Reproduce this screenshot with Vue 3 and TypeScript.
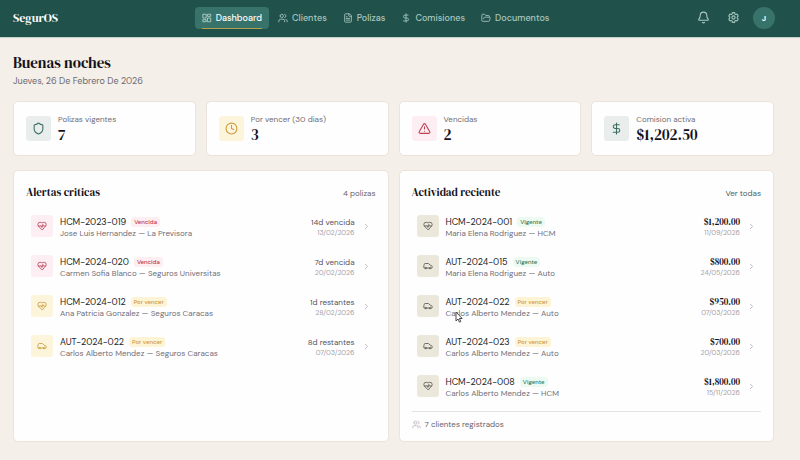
<script setup lang="ts">
import { h, type FunctionalComponent } from 'vue'

type Tone = 'danger' | 'warn' | 'green' | 'neutral'
type Status = 'Vencida' | 'Por vencer' | 'Vigente'

interface Policy {
  code: string
  status: Status
  detail: string
  value: string
  date: string
  icon: 'heart' | 'car'
  tone: Tone
}

const glyphs: Record<string, string[]> = {
  dashboard: ['M3 3h7v9H3z', 'M14 3h7v5h-7z', 'M14 12h7v9h-7z', 'M3 16h7v5H3z'],
  users: [
    'M16 21v-2a4 4 0 0 0-4-4H6a4 4 0 0 0-4 4v2',
    'M5 7a4 4 0 1 0 8 0a4 4 0 1 0-8 0',
    'M22 21v-2a4 4 0 0 0-3-3.87',
    'M16 3.13a4 4 0 0 1 0 7.75',
  ],
  file: [
    'M15 2H6a2 2 0 0 0-2 2v16a2 2 0 0 0 2 2h12a2 2 0 0 0 2-2V7Z',
    'M14 2v4a2 2 0 0 0 2 2h4',
    'M10 9H8',
    'M16 13H8',
    'M16 17H8',
  ],
  dollar: ['M12 2v20', 'M17 5H9.5a3.5 3.5 0 0 0 0 7h5a3.5 3.5 0 0 1 0 7H6'],
  folder: [
    'm6 14 1.5-2.9A2 2 0 0 1 9.24 10H20a2 2 0 0 1 1.94 2.5l-1.54 6a2 2 0 0 1-1.95 1.5H4a2 2 0 0 1-2-2V5a2 2 0 0 1 2-2h3.9a2 2 0 0 1 1.69.9l.81 1.2a2 2 0 0 0 1.67.9H18a2 2 0 0 1 2 2v2',
  ],
  bell: [
    'M10.27 21a2 2 0 0 0 3.46 0',
    'M3.26 15.33A1 1 0 0 0 4 17h16a1 1 0 0 0 .74-1.67C19.41 13.96 18 12.5 18 8A6 6 0 0 0 6 8c0 4.5-1.41 5.96-2.74 7.33',
  ],
  gear: [
    'M9.594 3.94c.09-.542.56-.94 1.11-.94h2.593c.55 0 1.02.398 1.11.94l.213 1.281c.063.374.313.686.645.87.074.04.147.083.22.127.325.196.72.257 1.075.124l1.217-.456a1.125 1.125 0 0 1 1.37.49l1.296 2.247a1.125 1.125 0 0 1-.26 1.431l-1.003.827c-.293.241-.438.613-.43.992a7.723 7.723 0 0 1 0 .255c-.008.378.137.75.43.991l1.004.827c.424.35.534.955.26 1.43l-1.298 2.247a1.125 1.125 0 0 1-1.369.491l-1.217-.456c-.355-.133-.75-.072-1.076.124a6.47 6.47 0 0 1-.22.128c-.331.183-.581.495-.644.869l-.213 1.281c-.09.543-.56.94-1.11.94h-2.594c-.55 0-1.019-.398-1.11-.94l-.213-1.281c-.062-.374-.312-.686-.644-.87a6.52 6.52 0 0 1-.22-.127c-.325-.196-.72-.257-1.076-.124l-1.217.456a1.125 1.125 0 0 1-1.369-.49l-1.297-2.247a1.125 1.125 0 0 1 .26-1.431l1.004-.827c.292-.24.437-.613.43-.991a6.932 6.932 0 0 1 0-.255c.007-.38-.138-.751-.43-.992l-1.004-.827a1.125 1.125 0 0 1-.26-1.43l1.297-2.247a1.125 1.125 0 0 1 1.37-.491l1.216.456c.356.133.751.072 1.076-.124.072-.044.146-.086.22-.128.332-.183.582-.495.644-.869l.214-1.28Z',
    'M15 12a3 3 0 1 1-6 0a3 3 0 0 1 6 0Z',
  ],
  shield: [
    'M20 13c0 5-3.5 7.5-7.66 8.95a1 1 0 0 1-.67-.01C7.5 20.5 4 18 4 13V6a1 1 0 0 1 1-1c2 0 4.5-1.2 6.24-2.72a1.17 1.17 0 0 1 1.52 0C14.51 3.81 17 5 19 5a1 1 0 0 1 1 1z',
  ],
  clock: ['M2 12a10 10 0 1 0 20 0a10 10 0 1 0-20 0', 'M12 6v6l4 2'],
  alert: [
    'm21.73 18-8-14a2 2 0 0 0-3.48 0l-8 14A2 2 0 0 0 4 21h16a2 2 0 0 0 1.73-3',
    'M12 9v4',
    'M12 17h.01',
  ],
  heart: [
    'M19 14c1.49-1.46 3-3.21 3-5.5A5.5 5.5 0 0 0 16.5 3c-1.76 0-3 .5-4.5 2-1.5-1.5-2.74-2-4.5-2A5.5 5.5 0 0 0 2 8.5c0 2.3 1.5 4.05 3 5.5l7 7Z',
    'M3.22 12H9.5l.5-1 2 4.5 2-7 1.5 3.5h5.27',
  ],
  car: [
    'M19 17h2c.6 0 1-.4 1-1v-3c0-.9-.7-1.7-1.5-1.9L17 10l-3-3.5c-.4-.3-.8-.5-1.3-.5H5c-.8 0-1.4.4-1.7 1.1L2 11v5c0 .6.4 1 1 1h2',
    'M5 17a2 2 0 1 0 4 0a2 2 0 1 0-4 0',
    'M9 17h6',
    'M15 17a2 2 0 1 0 4 0a2 2 0 1 0-4 0',
  ],
  chevron: ['m9 18 6-6-6-6'],
}

const Icon: FunctionalComponent<{ name: string }> = (props) =>
  h(
    'svg',
    { viewBox: '0 0 24 24', class: 'icon', 'aria-hidden': 'true' },
    glyphs[props.name].map((d) => h('path', { d })),
  )
Icon.props = ['name']

const nav = [
  { label: 'Dashboard', icon: 'dashboard' },
  { label: 'Clientes', icon: 'users' },
  { label: 'Polizas', icon: 'file' },
  { label: 'Comisiones', icon: 'dollar' },
  { label: 'Documentos', icon: 'folder' },
]

const stats: { label: string; value: string; icon: string; tone: Tone }[] = [
  { label: 'Polizas vigentes', value: '7', icon: 'shield', tone: 'green' },
  { label: 'Por vencer (30 dias)', value: '3', icon: 'clock', tone: 'warn' },
  { label: 'Vencidas', value: '2', icon: 'alert', tone: 'danger' },
  { label: 'Comision activa', value: '$1,202.50', icon: 'dollar', tone: 'green' },
]

const alerts: Policy[] = [
  { code: 'HCM-2023-019', status: 'Vencida', detail: 'Jose Luis Hernandez — La Previsora', value: '14d vencida', date: '13/02/2026', icon: 'heart', tone: 'danger' },
  { code: 'HCM-2024-020', status: 'Vencida', detail: 'Carmen Sofia Blanco — Seguros Universitas', value: '7d vencida', date: '20/02/2026', icon: 'heart', tone: 'danger' },
  { code: 'HCM-2024-012', status: 'Por vencer', detail: 'Ana Patricia Gonzalez — Seguros Caracas', value: '1d restantes', date: '28/02/2026', icon: 'heart', tone: 'warn' },
  { code: 'AUT-2024-022', status: 'Por vencer', detail: 'Carlos Alberto Mendez — Seguros Caracas', value: '8d restantes', date: '07/03/2026', icon: 'car', tone: 'warn' },
]

const activity: Policy[] = [
  { code: 'HCM-2024-001', status: 'Vigente', detail: 'Maria Elena Rodriguez — HCM', value: '$1,200.00', date: '11/09/2026', icon: 'heart', tone: 'neutral' },
  { code: 'AUT-2024-015', status: 'Vigente', detail: 'Maria Elena Rodriguez — Auto', value: '$800.00', date: '24/05/2026', icon: 'car', tone: 'neutral' },
  { code: 'AUT-2024-022', status: 'Por vencer', detail: 'Carlos Alberto Mendez — Auto', value: '$950.00', date: '07/03/2026', icon: 'car', tone: 'neutral' },
  { code: 'AUT-2024-023', status: 'Por vencer', detail: 'Carlos Alberto Mendez — Auto', value: '$700.00', date: '20/03/2026', icon: 'car', tone: 'neutral' },
  { code: 'HCM-2024-008', status: 'Vigente', detail: 'Carlos Alberto Mendez — HCM', value: '$1,800.00', date: '15/11/2026', icon: 'heart', tone: 'neutral' },
]

const panels = [
  { title: 'Alertas criticas', rows: alerts, money: false },
  { title: 'Actividad reciente', rows: activity, money: true },
]

const badgeTone: Record<Status, string> = {
  Vencida: 'badge-danger',
  'Por vencer': 'badge-warn',
  Vigente: 'badge-ok',
}
</script>

<template>
  <div class="page">
    <header class="topbar">
      <a class="brand" href="#">SegurOS</a>
      <nav class="nav">
        <a
          v-for="(item, i) in nav"
          :key="item.label"
          href="#"
          class="nav-item"
          :class="{ active: i === 0 }"
        >
          <Icon :name="item.icon" />
          <span>{{ item.label }}</span>
        </a>
      </nav>
      <div class="actions">
        <button type="button" class="icon-button" aria-label="Notificaciones"><Icon name="bell" /></button>
        <button type="button" class="icon-button" aria-label="Ajustes"><Icon name="gear" /></button>
        <button type="button" class="avatar">J</button>
      </div>
    </header>

    <main class="content">
      <div class="greeting">
        <h1>Buenas noches</h1>
        <p>Jueves, 26 De Febrero De 2026</p>
      </div>

      <section class="stats">
        <article v-for="s in stats" :key="s.label" class="card stat">
          <span class="tile tile-large" :class="s.tone"><Icon :name="s.icon" /></span>
          <div class="stat-text">
            <span class="stat-label">{{ s.label }}</span>
            <strong class="stat-value">{{ s.value }}</strong>
          </div>
        </article>
      </section>

      <div class="panels">
        <section v-for="p in panels" :key="p.title" class="card panel">
          <div class="panel-head">
            <h2>{{ p.title }}</h2>
            <a v-if="p.money" href="#" class="panel-link">Ver todas</a>
            <span v-else class="panel-note">4 polizas</span>
          </div>
          <ul class="rows">
            <li v-for="r in p.rows" :key="r.code">
              <a href="#" class="row">
                <span class="tile" :class="r.tone"><Icon :name="r.icon" /></span>
                <span class="row-main">
                  <span class="row-title">
                    <span class="code">{{ r.code }}</span>
                    <span class="badge" :class="badgeTone[r.status]">{{ r.status }}</span>
                  </span>
                  <span class="detail">{{ r.detail }}</span>
                </span>
                <span class="row-side">
                  <span :class="p.money ? 'amount' : 'days'">{{ r.value }}</span>
                  <span class="date">{{ r.date }}</span>
                </span>
                <span class="chevron"><Icon name="chevron" /></span>
              </a>
            </li>
          </ul>
          <footer v-if="p.money" class="panel-foot">
            <Icon name="users" />
            <span>7 clientes registrados</span>
          </footer>
        </section>
      </div>
    </main>

    <svg class="pointer" viewBox="0 0 8 12" aria-hidden="true">
      <path d="M1 1v9l2-2 1.5 3.2 1.3-.6L4.4 7.5h2.8z" />
    </svg>
  </div>
</template>

<style>
body {
  margin: 0;
  background: #f5efe9;
}
</style>

<style scoped>
.page {
  position: relative;
  min-height: 100vh;
  background: #f5efe9;
  color: #211f26;
  font-family: 'DM Sans', Inter, 'Liberation Sans', sans-serif;
  font-size: 9px;
  line-height: 12px;
}
a {
  color: inherit;
  text-decoration: none;
}
h1,
h2,
p,
ul {
  margin: 0;
  padding: 0;
}
ul {
  list-style: none;
}
button {
  border: 0;
  padding: 0;
  font: inherit;
  color: inherit;
  background: none;
}
.icon {
  display: block;
  flex: none;
  width: 10px;
  height: 10px;
  fill: none;
  stroke: currentColor;
  stroke-width: 2;
  stroke-linecap: round;
  stroke-linejoin: round;
}
.brand,
h1,
h2,
.stat-value,
.amount {
  font-family: 'DM Serif Display', 'Liberation Serif', serif;
  font-weight: 400;
}

.topbar {
  display: flex;
  align-items: center;
  justify-content: space-between;
  height: 37px;
  box-sizing: border-box;
  padding: 0 25px 2px 13px;
  background: #20524b;
  box-shadow: 0 1px 0 #c3d2ca;
}
.brand {
  color: #fff;
  font-size: 12px;
  line-height: 16px;
}
.nav {
  display: flex;
  gap: 2px;
}
.nav-item {
  display: flex;
  align-items: center;
  gap: 4px;
  height: 22px;
  padding: 0 7px;
  border-radius: 4px;
  color: #abc8c0;
  font-weight: 500;
}
.nav-item.active {
  position: relative;
  background: #37736a;
  color: #fff;
}
.nav-item.active .icon {
  color: #b9d5cd;
}
.nav-item.active::after {
  content: '';
  position: absolute;
  left: 7px;
  right: 7px;
  bottom: 0;
  height: 1px;
  background: #b3a052;
}
.actions {
  display: flex;
  align-items: center;
  gap: 9px;
  color: #abc8c0;
}
.icon-button {
  display: grid;
  place-items: center;
  width: 21px;
  height: 21px;
}
.icon-button .icon {
  width: 13px;
  height: 13px;
}
.avatar {
  width: 22px;
  height: 22px;
  border-radius: 50%;
  background: #37736a;
  color: #fff;
  font-size: 8px;
  font-weight: 700;
}

.content {
  padding: 16px 26px 18px 13px;
}
h1 {
  font-size: 15px;
  line-height: 20px;
  color: #14121a;
}
.greeting p {
  margin-top: 2px;
  color: #6e6a70;
}
.stats {
  display: grid;
  grid-template-columns: repeat(4, minmax(0, 1fr));
  gap: 10px;
  margin-top: 14px;
}
.card {
  background: #fffeff;
  border: 1px solid #ece3da;
  border-radius: 5px;
  box-sizing: border-box;
}
.stat {
  display: flex;
  align-items: center;
  gap: 7px;
  padding: 11px 12px;
}
.stat-text {
  display: flex;
  flex-direction: column;
}
.stat-label {
  font-size: 8px;
  line-height: 12px;
  color: #706c73;
}
.stat-value {
  font-size: 15px;
  line-height: 19px;
  color: #14121a;
}
.tile {
  display: grid;
  place-items: center;
  flex: none;
  width: 22px;
  height: 22px;
  border-radius: 3px;
}
.tile-large {
  width: 25px;
  height: 25px;
}
.tile-large .icon {
  width: 13px;
  height: 13px;
}
.danger {
  background: #fdeef3;
  color: #bc4152;
}
.warn {
  background: #fcf5dc;
  color: #cc9c3c;
}
.green {
  background: #e9eeed;
  color: #3c6e62;
}
.neutral {
  background: #ebe7da;
  color: #5d5a54;
}

.panels {
  display: grid;
  grid-template-columns: repeat(2, minmax(0, 1fr));
  gap: 10px;
  margin-top: 14px;
}
.panel {
  padding: 14px 12px 11px;
}
.panel-head {
  display: flex;
  align-items: center;
  justify-content: space-between;
  font-size: 8px;
  color: #67636c;
}
h2 {
  font-size: 11px;
  line-height: 16px;
  color: #14121a;
}
.panel-link {
  color: #46635f;
}
.rows {
  margin-top: 5px;
}
.row {
  display: flex;
  align-items: center;
  gap: 7px;
  height: 40px;
  padding: 0 5px;
}
.row-main {
  display: flex;
  flex-direction: column;
  flex: 1;
  min-width: 0;
  padding-top: 3px;
}
.row-title {
  display: flex;
  align-items: center;
  gap: 5px;
}
.code {
  font-size: 9px;
  line-height: 11px;
}
.badge {
  padding: 0 3px;
  border-radius: 3px;
  font-size: 6px;
  line-height: 10px;
  font-weight: 500;
}
.badge-danger {
  background: #fdeef2;
  color: #bd3348;
}
.badge-warn {
  background: #fdf4d6;
  color: #cf9740;
}
.badge-ok {
  background: #edfaf2;
  color: #34795a;
}
.detail {
  font-size: 8px;
  line-height: 11px;
  color: #706d75;
  white-space: nowrap;
}
.row-side {
  display: flex;
  flex-direction: column;
  align-items: flex-end;
  padding-top: 2px;
}
.days {
  font-size: 8px;
  line-height: 11px;
  color: #55515a;
}
.amount {
  font-size: 9px;
  line-height: 11px;
  color: #14121a;
}
.date {
  font-size: 7px;
  line-height: 10px;
  color: #a5a2a8;
}
.chevron {
  color: #aaa6ac;
}
.chevron .icon {
  width: 9px;
  height: 9px;
}
.panel-foot {
  display: flex;
  align-items: center;
  gap: 4px;
  margin-top: 5px;
  padding-top: 6px;
  border-top: 1px solid #e6e2e4;
  font-size: 8px;
  color: #67636c;
}
.panel-foot .icon {
  color: #b0adb2;
  width: 9px;
  height: 9px;
}
.pointer {
  position: absolute;
  left: 455px;
  top: 311px;
  width: 8px;
  height: 12px;
  fill: #fff;
  stroke: #4b484d;
  pointer-events: none;
}
</style>
